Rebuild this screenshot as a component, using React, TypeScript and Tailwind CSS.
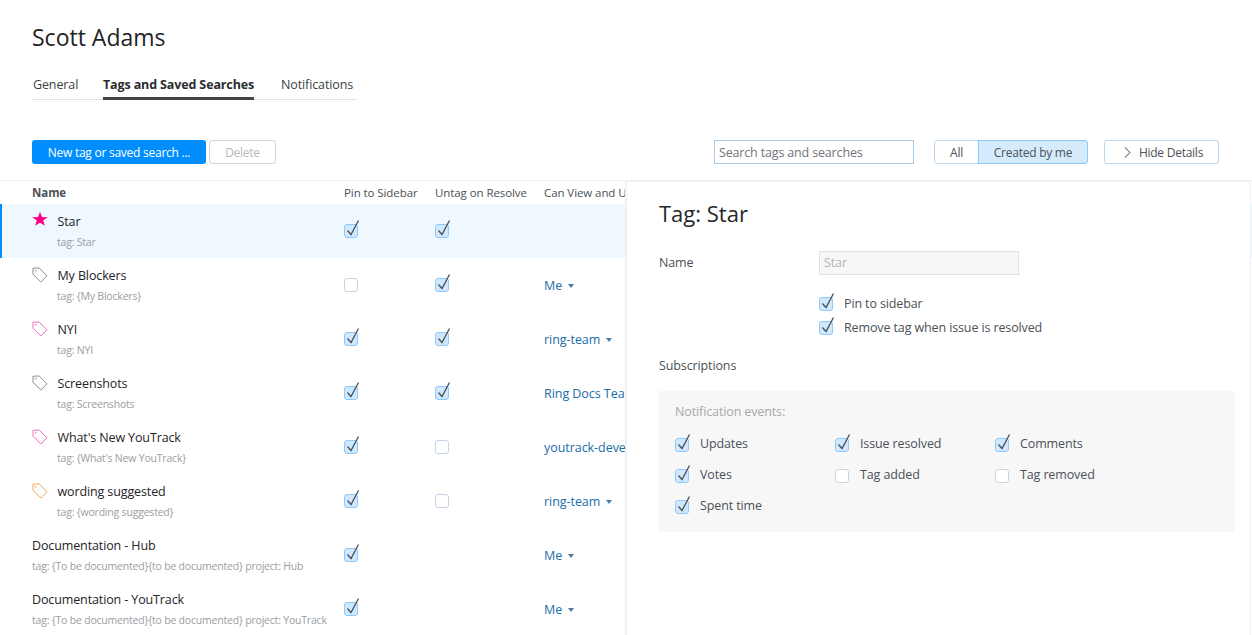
import React from "react";

function Check({ on, className = "" }: { on: boolean; className?: string }) {
  return (
    <span className={`relative block shrink-0 w-[14px] h-[14px] rounded-[3px] border ${on ? "bg-[#cfe8fd] border-[#8ec9fb]" : "bg-white border-[#c5d5e4]"} ${className}`}>
      {on && (
        <svg className="absolute left-[0px] top-[-6px]" width="16" height="19" viewBox="0 0 16 19" fill="none">
          <path d="M2.5 11.5 L6 15.5 L13.5 1.5" stroke="#4b5157" strokeWidth="1.3" />
        </svg>
      )}
    </span>
  );
}

function TagIcon({ color }: { color: string }) {
  return (
    <svg width="16" height="16" viewBox="0 0 16 16" fill="none" className="block mt-[1px]">
      <path d="M1 1.2 L7.2 1 L15 8.8 L8.8 15 L1 7.2 Z" stroke={color} strokeWidth="1" strokeLinejoin="round" fill="none" />
      <circle cx="3.8" cy="3.8" r="0.8" fill={color} />
    </svg>
  );
}

function StarIcon() {
  return (
    <svg width="16" height="14" viewBox="0 0 16 15" preserveAspectRatio="none" className="block">
      <path d="M8 0 L10 5.4 L15.8 5.6 L11.2 9.2 L12.9 14.8 L8 11.5 L3.1 14.8 L4.8 9.2 L0.2 5.6 L6 5.4 Z" fill="#ff008c" />
    </svg>
  );
}

type Row = {
  name: string;
  sub: string;
  icon?: React.ReactNode;
  pin: boolean;
  untag: boolean | null;
  owner?: string;
  active?: boolean;
};

const rows: Row[] = [
  { name: "Star", sub: "tag: Star", icon: <StarIcon />, pin: true, untag: true, active: true },
  { name: "My Blockers", sub: "tag: {My Blockers}", icon: <TagIcon color="#8c8c8c" />, pin: false, untag: true, owner: "Me" },
  { name: "NYI", sub: "tag: NYI", icon: <TagIcon color="#f06cc0" />, pin: true, untag: true, owner: "ring-team" },
  { name: "Screenshots", sub: "tag: Screenshots", icon: <TagIcon color="#8c8c8c" />, pin: true, untag: true, owner: "Ring Docs Team" },
  { name: "What's New YouTrack", sub: "tag: {What's New YouTrack}", icon: <TagIcon color="#f06cc0" />, pin: true, untag: false, owner: "youtrack-developers" },
  { name: "wording suggested", sub: "tag: {wording suggested}", icon: <TagIcon color="#f0a860" />, pin: true, untag: false, owner: "ring-team" },
  { name: "Documentation - Hub", sub: "tag: {To be documented}{to be documented} project: Hub", pin: true, untag: null, owner: "Me" },
  { name: "Documentation - YouTrack", sub: "tag: {To be documented}{to be documented} project: YouTrack", pin: true, untag: null, owner: "Me" },
];

function TableRow({ r }: { r: Row }) {
  return (
    <div className={`relative flex h-[54px] ${r.active ? "bg-[#f0f8ff]" : ""}`}>
      {r.active && <span className="absolute left-0 top-0 bottom-0 w-[2px] bg-[#008eff]" />}
      <div className="w-[344px] shrink-0 pl-[32px] pt-[8px]">
        <div className="flex items-start">
          {r.icon && <span className="w-[25.5px] shrink-0">{r.icon}</span>}
          <span className="text-[12.5px] leading-[18px] pt-[1px] tracking-[-0.12px] text-[#1f2326] whitespace-nowrap">{r.name}</span>
        </div>
        <div className={`text-[10.5px] leading-[14px] tracking-[-0.2px] mt-[4px] text-[#9a9ea2] whitespace-nowrap ${r.icon ? "pl-[25px]" : ""}`}>{r.sub}</div>
      </div>
      <div className="w-[91px] shrink-0 pt-[20px]"><Check on={r.pin} /></div>
      <div className="w-[109px] shrink-0 pt-[20px]">{r.untag !== null && <Check on={r.untag} />}</div>
      {r.owner && (
        <div className="pt-[19px] flex items-start whitespace-nowrap text-[12.5px] tracking-[-0.05px] leading-[18px] text-[#1a6ea8]">
          {r.owner}
          <svg className="ml-[6px] mt-[7px]" width="6" height="4" viewBox="0 0 6 4"><path d="M0 0H6L3 4Z" fill="#4a7fa5" /></svg>
        </div>
      )}
    </div>
  );
}

function Labeled({ on, label }: { on: boolean; label: string }) {
  return (
    <label className="flex items-center gap-[11px] h-[31px]">
      <Check on={on} />
      <span className="text-[12.5px] tracking-[-0.12px] text-[#4b5157] whitespace-nowrap">{label}</span>
    </label>
  );
}

export default function App() {
  return (
    <div className="relative h-[635px] w-[1252px] overflow-hidden bg-white font-['Open_Sans','Noto_Sans',sans-serif] text-[#34393d]">
      <h1 className="pl-[32px] pt-[21px] text-[23px] leading-[33px] text-[#1f2326]">Scott Adams</h1>

      <div className="ml-[32px] mt-[13px] flex w-[325px] h-[33px] border-b border-[#e1e3e6] text-[12.5px] tracking-[-0.12px]">
        <span className="w-[71px] pl-[1px] pt-[9px] text-[#3a3f44]">General</span>
        <span className="relative w-[178px] pt-[9px] font-bold tracking-[-0.13px] text-[#2a2d30] whitespace-nowrap">
          Tags and Saved Searches
          <span className="absolute left-0 w-[151px] -bottom-[1px] h-[3px] bg-[#444444]" />
        </span>
        <span className="pt-[9px] text-[#3a3f44]">Notifications</span>
      </div>

      <div className="mt-[40px] flex items-start pl-[32px] pr-[33px] h-[24px] text-[12px] tracking-[-0.25px]">
        <button className="w-[174px] h-[24px] pt-[2px] rounded-[3px] bg-[#008eff] text-white">New tag or saved search ...</button>
        <button className="ml-[3px] w-[67px] h-[24px] pt-[1px] rounded-[3px] border border-[#c8d6e2] text-[#b8b8b8]">Delete</button>
        <div className="ml-auto flex items-start">
          <div className="w-[200px] h-[24px] border border-[#a8cdea] pl-[4px] text-[12.5px] tracking-[-0.16px] leading-[23px] text-[#6f7478]">Search tags and searches</div>
          <div className="ml-[20px] flex h-[24px]">
            <span className="w-[45px] text-center leading-[23px] border border-[#b9d7ef] rounded-l-[3px] text-[#4b5157]">All</span>
            <span className="w-[110px] text-center leading-[23px] border border-[#8ec9fb] rounded-r-[3px] bg-[#d4ebfe] text-[#4b5157] -ml-[1px]">Created by me</span>
          </div>
          <button className="ml-[16px] w-[115px] h-[24px] pt-[1px] pl-[3px] flex items-center justify-center rounded-[3px] border border-[#b9d7ef] text-[#4b5157]">
            <svg className="mr-[8px] ml-[1px]" width="7" height="11" viewBox="0 0 7 11" fill="none"><path d="M1 .5 6 5.5 1 10.5" stroke="#8a8f94" strokeWidth="1.1" /></svg>
            Hide Details
          </button>
        </div>
      </div>

      <div className="mt-[16px] border-t border-[#f3f4f5]">
        <div className="flex h-[23px] pt-[1px] text-[11.5px] tracking-[-0.08px] leading-[22px] text-[#4b5157]">
          <span className="w-[344px] pl-[32px] font-bold">Name</span>
          <span className="w-[91px]">Pin to Sidebar</span>
          <span className="w-[109px]">Untag on Resolve</span>
          <span className="whitespace-nowrap">Can View and Use</span>
        </div>
        {rows.map((r) => <TableRow key={r.name} r={r} />)}
      </div>

      <aside className="absolute left-[625px] top-[180px] bottom-0 w-[626px] bg-white border-t-2 border-l-2 border-r border-[#eef0f2] pl-[32px] pr-[15px]">
        <h2 className="mt-[16px] text-[22px] leading-[30px] text-[#24282c]">Tag: Star</h2>
        <div className="mt-[23px] flex items-start text-[12.5px] tracking-[-0.12px]">
          <span className="w-[160px] leading-[24px] text-[#4b5157]">Name</span>
          <div className="w-[200px] h-[24px] border border-[#dfe1e3] bg-[#f7f7f7] pl-[4px] leading-[22px] text-[#b5b5b5]">Star</div>
        </div>
        <div className="mt-[22px] ml-[160px] flex flex-col gap-[10px] text-[12.5px] tracking-[-0.12px] text-[#4b5157]">
          <label className="flex items-center gap-[11px] h-[14px]"><Check on /><span>Pin to sidebar</span></label>
          <label className="flex items-center gap-[11px] h-[14px]"><Check on /><span>Remove tag when issue is resolved</span></label>
        </div>
        <div className="mt-[22px] text-[12.5px] tracking-[-0.12px] leading-[18px] text-[#4b5157]">Subscriptions</div>
        <div className="mt-[16px] h-[141px] bg-[#f7f7f7] pl-[16px] pt-[12px]">
          <div className="text-[12.5px] tracking-[-0.12px] leading-[18px] text-[#a5a8ab]">Notification events:</div>
          <div className="mt-[8px] grid grid-cols-[160px_160px_160px]">
            <Labeled on label="Updates" />
            <Labeled on label="Issue resolved" />
            <Labeled on label="Comments" />
            <Labeled on label="Votes" />
            <Labeled on={false} label="Tag added" />
            <Labeled on={false} label="Tag removed" />
            <Labeled on label="Spent time" />
          </div>
        </div>
      </aside>
    </div>
  );
}
